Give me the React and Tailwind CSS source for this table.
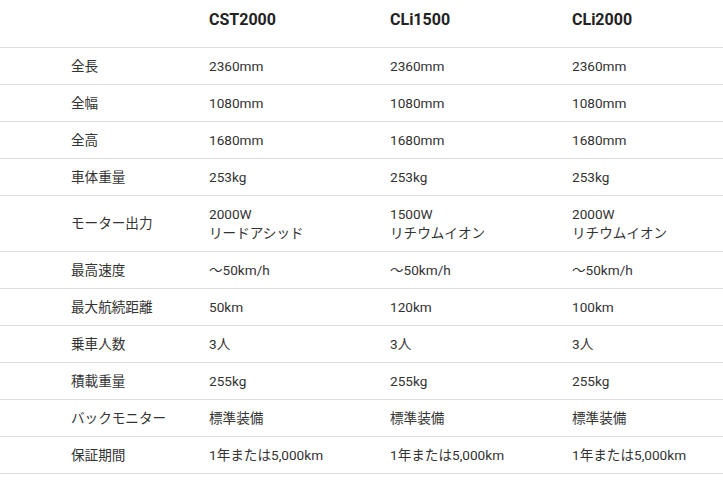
import React from 'react';

const models = ['CST2000', 'CLi1500', 'CLi2000'];

const rows = [
  ['全長', '2360mm', '2360mm', '2360mm'],
  ['全幅', '1080mm', '1080mm', '1080mm'],
  ['全高', '1680mm', '1680mm', '1680mm'],
  ['車体重量', '253kg', '253kg', '253kg'],
  ['モーター出力', ['2000W', 'リードアシッド'], ['1500W', 'リチウムイオン'], ['2000W', 'リチウムイオン']],
  ['最高速度', '～50km/h', '～50km/h', '～50km/h'],
  ['最大航続距離', '50km', '120km', '100km'],
  ['乗車人数', '3人', '3人', '3人'],
  ['積載重量', '255kg', '255kg', '255kg'],
  ['バックモニター', '標準装備', '標準装備', '標準装備'],
  ['保証期間', '1年または5,000km', '1年または5,000km', '1年または5,000km'],
];

const font = { fontFamily: 'Roboto, "Noto Sans CJK JP", sans-serif' };

const Cell = ({ value, first }) => (
  <div className={`py-[8.5px] leading-[19px] flex flex-col justify-center ${first ? 'pl-[71px]' : ''}`}>
    {Array.isArray(value) ? value.map((v) => <span key={v}>{v}</span>) : <span>{value}</span>}
  </div>
);

const App = () => {
  return (
    <div className="w-[723px] h-[482px] bg-white text-[#333] overflow-hidden" style={font}>
      {/* header */}
      <div className="grid grid-cols-[209px_181px_182px_1fr] h-[48px] border-b border-[#dddddd]">
        <div />
        {models.map((m) => (
          <div key={m} className="pt-[10px] text-[16px] leading-[20px] font-bold text-[#222]">{m}</div>
        ))}
      </div>

      {rows.map((r) => (
        <div key={r[0]} className="grid grid-cols-[209px_181px_182px_1fr] border-b border-[#dddddd] text-[13.6px]">
          {r.map((v, i) => (
            <Cell key={i} value={v} first={i === 0} />
          ))}
        </div>
      ))}
    </div>
  );
};

export default App;
